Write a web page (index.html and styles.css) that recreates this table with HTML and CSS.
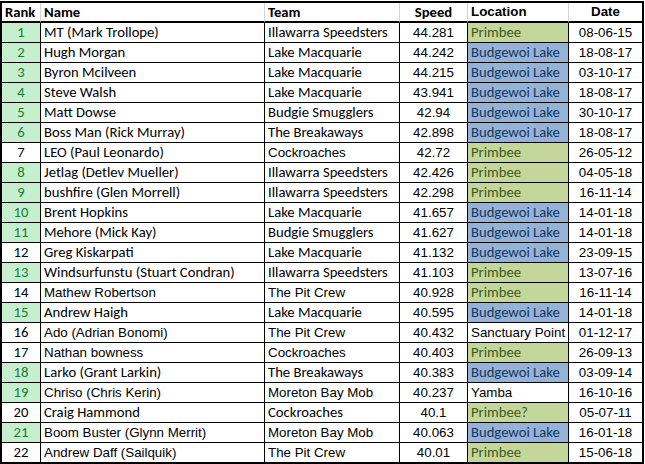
FILE: index.html
```html
<!DOCTYPE html>
<html>
<head>
<meta charset="utf-8">
<link rel="stylesheet" href="styles.css">
</head>
<body>
<table class="sheet">
<colgroup>
<col class="w-rank"><col class="w-name"><col class="w-team"><col class="w-speed"><col class="w-loc"><col class="w-date">
</colgroup>
<thead>
<tr>
<th class="rank c">Rank</th><th class="c left">Name</th><th class="c left">Team</th><th class="c ctr">Speed</th><th class="a left">Location</th><th class="a ctr last">Date</th>
</tr>
</thead>
<tbody>
<tr><td class="rank g">1</td><td class="c">MT (Mark Trollope)</td><td class="c">Illawarra Speedsters</td><td class="num">44.281</td><td class="c lp">Primbee</td><td class="dt">08-06-15</td></tr>
<tr><td class="rank g">2</td><td class="c">Hugh Morgan</td><td class="c">Lake Macquarie</td><td class="num">44.242</td><td class="c lb">Budgewoi Lake</td><td class="dt">18-08-17</td></tr>
<tr><td class="rank g">3</td><td class="c">Byron Mcilveen</td><td class="c">Lake Macquarie</td><td class="num">44.215</td><td class="c lb">Budgewoi Lake</td><td class="dt">03-10-17</td></tr>
<tr><td class="rank g">4</td><td class="c">Steve Walsh</td><td class="c">Lake Macquarie</td><td class="num">43.941</td><td class="c lb">Budgewoi Lake</td><td class="dt">18-08-17</td></tr>
<tr><td class="rank g">5</td><td class="c">Matt Dowse</td><td class="c">Budgie Smugglers</td><td class="num">42.94</td><td class="c lb">Budgewoi Lake</td><td class="dt">30-10-17</td></tr>
<tr><td class="rank g">6</td><td class="c">Boss Man (Rick Murray)</td><td class="c">The Breakaways</td><td class="num">42.898</td><td class="c lb">Budgewoi Lake</td><td class="dt">18-08-17</td></tr>
<tr><td class="rank">7</td><td class="c">LEO (Paul Leonardo)</td><td class="a">Cockroaches</td><td class="num">42.72</td><td class="c lp">Primbee</td><td class="dt">26-05-12</td></tr>
<tr><td class="rank g">8</td><td class="c">Jetlag (Detlev Mueller)</td><td class="c">Illawarra Speedsters</td><td class="num">42.426</td><td class="c lp">Primbee</td><td class="dt">04-05-18</td></tr>
<tr><td class="rank g">9</td><td class="c">bushfire (Glen Morrell)</td><td class="c">Illawarra Speedsters</td><td class="num">42.298</td><td class="c lp">Primbee</td><td class="dt">16-11-14</td></tr>
<tr><td class="rank g">10</td><td class="c">Brent Hopkins</td><td class="c">Lake Macquarie</td><td class="num">41.657</td><td class="c lb">Budgewoi Lake</td><td class="dt">14-01-18</td></tr>
<tr><td class="rank g">11</td><td class="c">Mehore (Mick Kay)</td><td class="c">Budgie Smugglers</td><td class="num">41.627</td><td class="c lb">Budgewoi Lake</td><td class="dt">14-01-18</td></tr>
<tr><td class="rank">12</td><td class="c">Greg Kiskarpati</td><td class="c">Lake Macquarie</td><td class="num">41.132</td><td class="c lb">Budgewoi Lake</td><td class="dt">23-09-15</td></tr>
<tr><td class="rank g">13</td><td class="c">Windsurfunstu (Stuart Condran)</td><td class="c">Illawarra Speedsters</td><td class="num">41.103</td><td class="c lp">Primbee</td><td class="dt">13-07-16</td></tr>
<tr><td class="rank">14</td><td class="a">Mathew Robertson</td><td class="a">The Pit Crew</td><td class="num">40.928</td><td class="c lp">Primbee</td><td class="dt">16-11-14</td></tr>
<tr><td class="rank g">15</td><td class="c">Andrew Haigh</td><td class="c">Lake Macquarie</td><td class="num">40.595</td><td class="c lb">Budgewoi Lake</td><td class="dt">14-01-18</td></tr>
<tr><td class="rank">16</td><td class="a">Ado (Adrian Bonomi)</td><td class="a">The Pit Crew</td><td class="num">40.432</td><td class="a">Sanctuary Point</td><td class="dt">01-12-17</td></tr>
<tr><td class="rank">17</td><td class="a">Nathan bowness</td><td class="a">Cockroaches</td><td class="num">40.403</td><td class="c lp">Primbee</td><td class="dt">26-09-13</td></tr>
<tr><td class="rank g">18</td><td class="c">Larko (Grant Larkin)</td><td class="c">The Breakaways</td><td class="num">40.383</td><td class="c lb">Budgewoi Lake</td><td class="dt">03-09-14</td></tr>
<tr><td class="rank g">19</td><td class="a">Chriso (Chris Kerin)</td><td class="a">Moreton Bay Mob</td><td class="num">40.237</td><td class="a">Yamba</td><td class="dt">16-10-16</td></tr>
<tr><td class="rank">20</td><td class="c">Craig Hammond</td><td class="c">Cockroaches</td><td class="num">40.1</td><td class="c lp">Primbee?</td><td class="dt">05-07-11</td></tr>
<tr><td class="rank g">21</td><td class="a">Boom Buster (Glynn Merrit)</td><td class="a">Moreton Bay Mob</td><td class="num">40.063</td><td class="c lb">Budgewoi Lake</td><td class="dt">16-01-18</td></tr>
<tr><td class="rank">22</td><td class="a">Andrew Daff (Sailquik)</td><td class="a">The Pit Crew</td><td class="num">40.01</td><td class="c lp">Primbee</td><td class="dt">15-06-18</td></tr>
</tbody>
</table>
</body>
</html>
```
FILE: styles.css
```css
html, body {
  margin: 0;
  padding: 0;
  background: #fff;
}
body {
  padding-top: 1px;
}
.sheet {
  width: 644px;
  table-layout: fixed;
  border-collapse: separate;
  border-spacing: 0;
  border: 2px solid #000;
  color: #000;
}
.w-rank { width: 39px; }
.w-name { width: 224px; }
.w-team { width: 135px; }
.w-speed { width: 68px; }
.w-loc { width: 101px; }
.w-date { width: auto; }

th, td {
  padding: 0 3px;
  white-space: nowrap;
  overflow: hidden;
  vertical-align: bottom;
  text-align: left;
}
th {
  height: 18px;
  line-height: 18px;
  font-weight: bold;
  border-right: 1px solid #d4d4d4;
  border-bottom: 2px solid #000;
}
th.last { border-right: none; }
td {
  height: 19px;
  line-height: 19px;
  border-right: 1px solid #000;
  border-bottom: 1px solid #000;
}
td:last-child { border-right: none; }
tbody tr:last-child td { border-bottom: none; height: 18px; }

.c {
  font-family: Carlito, "Liberation Sans", sans-serif;
  font-size: 14.67px;
}
.a, .num, .dt {
  font-family: "Liberation Sans", Arial, sans-serif;
  font-size: 13.33px;
}
.rank {
  font-family: Carlito, "Liberation Sans", sans-serif;
  font-size: 14.67px;
  text-align: center;
  padding: 0;
}
th.rank { text-align: left; padding-left: 3px; }
.g {
  background: #c6efce;
  color: #1e7b34;
}
.ctr, .num, .dt { text-align: center; }
.lp {
  background: #c4d79b;
  color: #3f5a1f;
}
.lb {
  background: #95b3d7;
  color: #16365c;
}
```
